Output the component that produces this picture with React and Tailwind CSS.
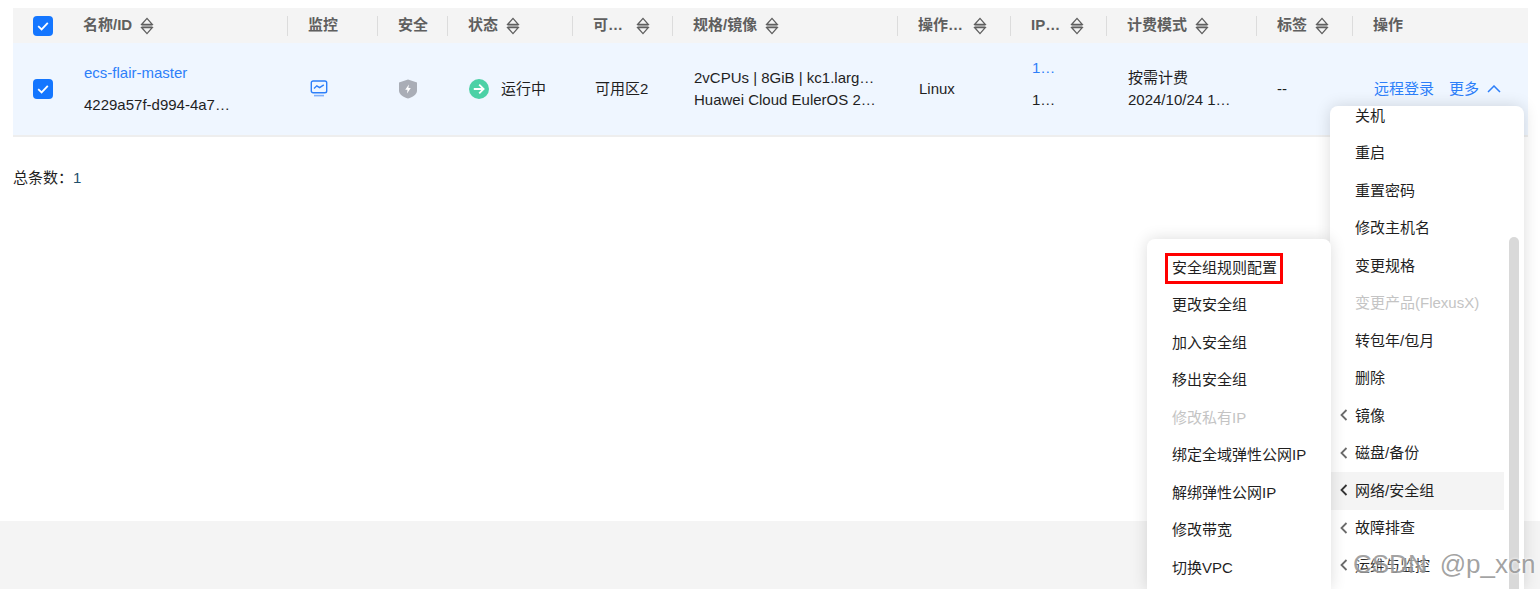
import React from "react";

const font = "font-['Liberation_Sans','Noto_Sans_CJK_SC',sans-serif]";

const columns = [
    { label: "名称/ID", sort: true },
    { label: "监控" },
    { label: "安全" },
    { label: "状态", sort: true },
    { label: "可…", sort: true, gap: "gap-[14px]" },
    { label: "规格/镜像", sort: true },
    { label: "操作…", sort: true, gap: "gap-[11px]" },
    { label: "IP…", sort: true, gap: "gap-[11px]" },
    { label: "计费模式", sort: true },
    { label: "标签", sort: true },
    { label: "操作" },
];

const mainMenu = [
    { label: "关机" },
    { label: "重启" },
    { label: "重置密码" },
    { label: "修改主机名" },
    { label: "变更规格" },
    { label: "变更产品(FlexusX)", disabled: true },
    { label: "转包年/包月" },
    { label: "删除" },
    { label: "镜像", sub: true },
    { label: "磁盘/备份", sub: true },
    { label: "网络/安全组", sub: true, active: true },
    { label: "故障排查", sub: true },
    { label: "运维与监控", sub: true },
];

const subMenu = [
    { label: "安全组规则配置", boxed: true },
    { label: "更改安全组" },
    { label: "加入安全组" },
    { label: "移出安全组" },
    { label: "修改私有IP", disabled: true },
    { label: "绑定全域弹性公网IP" },
    { label: "解绑弹性公网IP" },
    { label: "修改带宽" },
    { label: "切换VPC" },
];

function SortIcon() {
    return (
        <svg width="14" height="18" viewBox="0 0 14 18" fill="none" stroke="#5f5f5f" strokeWidth="1.300" className="shrink-0 -ml-[1px]">
            <path d="M1.800 7.300 7 1.400l5.200 5.900z" />
            <path d="M1.800 10.700 7 16.600l5.200-5.900z" />
            <path d="M1.500 9h11" stroke="#8a8a8a" strokeWidth="1.600" />
        </svg>
    );
}

function Checkbox() {
    return (
        <div className="w-5 h-5 rounded-[4px] bg-[#1476ff] flex items-center justify-center">
            <svg width="14" height="14" viewBox="0 0 14 14" fill="none" stroke="white" strokeWidth="1.800">
                <path d="M2.200 7.200 5.600 10.400 11.800 3.800" />
            </svg>
        </div>
    );
}

function MonitorIcon() {
    return (
        <svg width="18" height="18" viewBox="0 0 18 18" fill="none" stroke="#2d7ff9" strokeWidth="1.400">
            <rect x="1.300" y="1" width="15.400" height="11.800" rx="1.800" />
            <path d="M4 8.400 6.800 5.800 9.600 7.600 13.800 4.800" />
            <path d="M4 15.600h10" strokeWidth="1.600" stroke="#7fb0fb" />
        </svg>
    );
}

function ShieldIcon() {
    return (
        <svg width="20" height="20" viewBox="0 0 20 20">
            <path d="M10 .5 19 3.400v8c0 3.900-4.400 6.800-9 8.100-4.600-1.300-9-4.200-9-8.100v-8z" fill="#a9adb6" />
            <path d="M10.900 5.500 7.200 10.800h2.300l-.5 3.700 3.800-5.400h-2.400z" fill="#ffffff" />
        </svg>
    );
}

function RunningIcon() {
    return (
        <svg width="20" height="20" viewBox="0 0 20 20" fill="none">
            <circle cx="10" cy="10" r="10" fill="#4cd1a6" />
            <path d="M4.800 10h9.600M10.200 5.600 14.600 10l-4.400 4.400" stroke="white" strokeWidth="1.800" />
        </svg>
    );
}

function MenuChevron({ active }) {
    return (
        <svg width="8" height="12" viewBox="0 0 8 12" fill="none" stroke={active ? "#333333" : "#6b6b6b"} strokeWidth="1.800">
            <path d="M6.500 1 1.500 6l5 5" />
        </svg>
    );
}

function MainMenu() {
    return (
        <div className="absolute left-[1330px] top-[106px] w-[194px] h-[483px] bg-white rounded-t-lg shadow-[0_0_16px_rgba(0,0,0,0.14)] overflow-hidden">
            <div className="-mt-[9px] w-[174px]">
                {mainMenu.map((item) => (
                    <div
                        key={item.label}
                        className={`h-[37.5px] flex items-center pl-[25px] relative ${item.active ? "bg-[#f4f4f4]" : ""} ${item.disabled ? "text-[#c4c4c4]" : "text-[#1f1f1f]"}`}
                    >
                        {item.sub && (
                            <span className="absolute left-[10px] top-[12px] flex">
                                <MenuChevron active={item.active} />
                            </span>
                        )}
                        {item.label}
                    </div>
                ))}
            </div>
            <div className="absolute left-[179px] top-[131px] w-[10px] h-[360px] rounded-full bg-[#d9d9d9]" />
        </div>
    );
}

function SubMenu() {
    return (
        <div className="absolute left-[1147px] top-[239px] w-[184px] h-[350px] bg-white rounded-t-lg shadow-[0_0_16px_rgba(0,0,0,0.14)] overflow-hidden pt-[10px]">
            {subMenu.map((item) => (
                <div
                    key={item.label}
                    className={`h-[37.5px] flex items-center pl-[25px] relative ${item.disabled ? "text-[#c4c4c4]" : "text-[#1f1f1f]"}`}
                >
                    {item.boxed && <div className="absolute left-[18px] top-[4px] w-[118px] h-[31px] border-[3px] border-[#ff0000]" />}
                    {item.label}
                </div>
            ))}
        </div>
    );
}

export default function App() {
    const grid = "grid grid-cols-[50px_225px_90px_70px_125px_100px_225px_113px_96px_150px_96px_175px]";

    return (
        <div className={`relative w-[1540px] h-[589px] overflow-hidden bg-white text-[15px] text-[#1f1f1f] ${font}`}>
            <div className="h-[521px] pt-2 pl-[13px] w-[1528px]">
                <div className={`${grid} h-[35px] bg-[#f4f4f4] items-center font-bold text-[#5f5f5f]`}>
                    <div className="flex justify-center pr-[10px] pl-5">
                        <Checkbox />
                    </div>
                    {columns.map((col, i) => (
                        <div key={i} className={`flex items-center ${col.gap || "gap-[9px]"} h-5 pl-5 ${i < columns.length - 1 ? "border-r border-[#dcdcdc]" : ""}`}>
                            <span>{col.label}</span>
                            {col.sort && <SortIcon />}
                        </div>
                    ))}
                </div>

                <div className={`${grid} h-[94px] bg-[#eff6ff] border-b-2 border-[#eeeeee] items-center`}>
                    <div className="flex justify-center pr-[10px] pl-5">
                        <Checkbox />
                    </div>
                    <div className="pl-[21px] flex flex-col gap-[13px] -mt-[2px]">
                        <span className="text-[#2d7ff9] leading-[19px]">ecs-flair-master</span>
                        <span className="leading-[19px]">4229a57f-d994-4a7…</span>
                    </div>
                    <div className="pl-[22px] flex -mt-[1px]">
                        <MonitorIcon />
                    </div>
                    <div className="pl-5 flex">
                        <ShieldIcon />
                    </div>
                    <div className="pl-[21px] flex items-center gap-3">
                        <RunningIcon />
                        <span>运行中</span>
                    </div>
                    <div className="pl-[22px]">可用区2</div>
                    <div className="pl-[21px] leading-[22px]">
                        <div>2vCPUs | 8GiB | kc1.larg…</div>
                        <div>Huawei Cloud EulerOS 2…</div>
                    </div>
                    <div className="pl-[21px]">Linux</div>
                    <div className="pl-[21px] flex flex-col gap-[13px] -mt-[11px]">
                        <span className="text-[#2d7ff9] leading-[19px]">1…</span>
                        <span className="leading-[19px]">1…</span>
                    </div>
                    <div className="pl-[21px] leading-[22px]">
                        <div>按需计费</div>
                        <div>2024/10/24 1…</div>
                    </div>
                    <div className="pl-5">--</div>
                    <div className="pl-[21px] flex items-center text-[#2d7ff9]">
                        <span>远程登录</span>
                        <span className="ml-[15px]">更多</span>
                        <svg width="14" height="8" viewBox="0 0 14 8" fill="none" stroke="#2d7ff9" strokeWidth="1.500" className="ml-[8px]">
                            <path d="M1 7 7 1l6 6" />
                        </svg>
                    </div>
                </div>

                <div className="mt-[31px] leading-[19px]">
                    总条数：<span className="text-[#1f4f6b]">1</span>
                </div>
            </div>

            <div className="h-[68px] bg-[#f4f4f4]" />

            <MainMenu />
            <SubMenu />

            <div className="absolute left-[1353px] top-[546px] flex gap-[13px] text-[26px] leading-[36px] text-[#8a8a8a]/80 whitespace-nowrap [text-shadow:0_0_3px_#ffffff]">
                <span>CSDN</span>
                <span>@p_xcn</span>
            </div>
        </div>
    );
}
